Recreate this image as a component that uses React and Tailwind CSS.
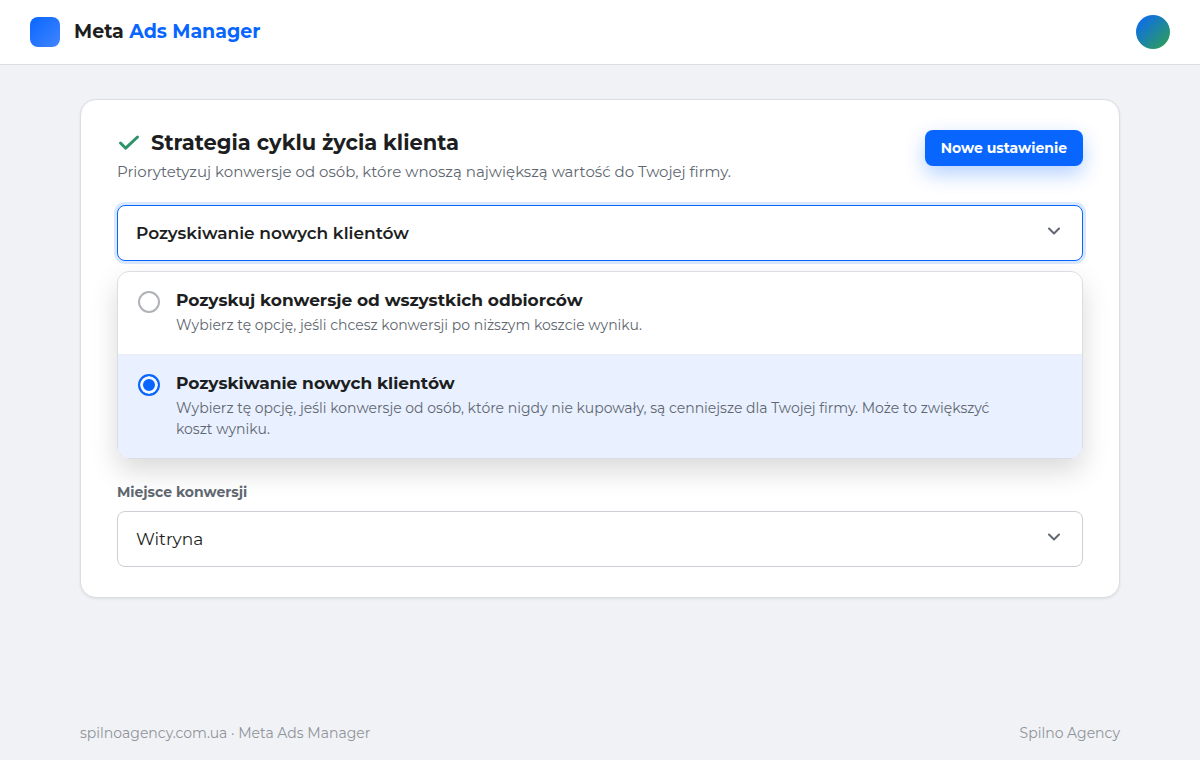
import { useState } from "react";

const OPTIONS = [
  {
    id: "all",
    title: "Pozyskuj konwersje od wszystkich odbiorców",
    text: "Wybierz tę opcję, jeśli chcesz konwersji po niższym koszcie wyniku.",
  },
  {
    id: "new",
    title: "Pozyskiwanie nowych klientów",
    text: "Wybierz tę opcję, jeśli konwersje od osób, które nigdy nie kupowały, są cenniejsze dla Twojej firmy. Może to zwiększyć koszt wyniku.",
  },
];

function Chevron() {
  return (
    <svg className="size-5 shrink-0" viewBox="0 0 20 20" fill="none" stroke="#606770" strokeWidth="2" strokeLinecap="round" strokeLinejoin="round" aria-hidden="true">
      <path d="M5 5.500l5 5 5-5" />
    </svg>
  );
}

function Header() {
  return (
    <header className="flex h-[65px] items-center justify-between border-b border-[#dadde1] bg-white px-[30px]">
      <div className="flex items-center gap-3.5">
        <span className="size-[30px] rounded-lg bg-[linear-gradient(135deg,#0866ff,#4285ff)]" />
        <span className="text-[19px] leading-[26px] font-bold">
          Meta <span className="text-[#0866ff]">Ads Manager</span>
        </span>
      </div>
      <span className="size-[34px] rounded-full bg-[linear-gradient(135deg,#0866ff,#31a24c)]" />
    </header>
  );
}

function Option({ option, checked, onSelect }) {
  return (
    <label className="flex cursor-pointer items-start gap-4 border-b border-[#ebedf0] px-5 pt-4 pb-[18px] last:border-b-0 has-checked:bg-[#e9f0ff]">
      <input
        type="radio"
        name="strategy"
        checked={checked}
        onChange={() => onSelect(option.id)}
        className="mt-[3px] size-[22px] shrink-0 appearance-none rounded-full border-2 border-[#b0b3b8] bg-white checked:border-[#0866ff] checked:bg-[#0866ff] checked:shadow-[inset_0_0_0_3px_#f3f7ff]"
      />
      <span className="block max-w-[840px]">
        <span className="block text-[17px] leading-6 font-bold">{option.title}</span>
        <span className="mt-[3px] block text-[14px] leading-[21px] text-[#606770]">{option.text}</span>
      </span>
    </label>
  );
}

export default function App() {
  const [open, setOpen] = useState(true);
  const [selected, setSelected] = useState("new");
  const current = OPTIONS.find((option) => option.id === selected);

  return (
    <div className="flex min-h-screen flex-col bg-[#f0f2f5] font-[Montserrat,Inter,sans-serif] text-[#1c1e21]">
      <Header />
      <main className="px-20 pt-[34px]">
        <section className="rounded-2xl border border-[#dadde1] bg-white px-9 py-[30px] shadow-[0_1px_3px_rgba(0,0,0,0.08)]">
          <div className="flex items-start justify-between gap-6">
            <div>
              <h1 className="flex items-center gap-2.5 text-[21px] leading-[26px] font-bold">
                <svg className="size-6" viewBox="0 0 24 24" fill="none" stroke="#2d9469" strokeWidth="3" strokeLinecap="round" strokeLinejoin="round" aria-hidden="true">
                  <path d="M3.500 12l5.200 5.200L20.500 6" />
                </svg>
                Strategia cyklu życia klienta
              </h1>
              <p className="mt-1 text-[15px] leading-6 text-[#606770]">
                Priorytetyzuj konwersje od osób, które wnoszą największą wartość do Twojej firmy.
              </p>
            </div>
            <button type="button" className="h-9 shrink-0 rounded-lg bg-[#0866ff] px-4 text-[14px] font-bold text-white shadow-[0_8px_20px_rgba(8,102,255,0.3)]">
              Nowe ustawienie
            </button>
          </div>

          <button
            type="button"
            aria-haspopup="true"
            aria-expanded={open}
            onClick={() => setOpen(!open)}
            className="mt-[21px] flex h-14 w-full items-center justify-between rounded-lg border border-[#0866ff] bg-white px-[18px] text-left text-[17px] font-semibold shadow-[0_0_0_3px_rgba(8,102,255,0.15)]"
          >
            <span className="pt-0.5">{current.title}</span>
            <Chevron />
          </button>

          {open && (
            <fieldset aria-label="Strategia cyklu życia klienta" className="mt-2.5 overflow-hidden rounded-xl border border-[#dadde1] bg-white shadow-[0_12px_28px_rgba(0,0,0,0.15)]">
              {OPTIONS.map((option) => (
                <Option key={option.id} option={option} checked={option.id === selected} onSelect={setSelected} />
              ))}
            </fieldset>
          )}

          <label htmlFor="place" className="mt-[23px] block text-[14px] leading-5 font-bold text-[#606770]">
            Miejsce konwersji
          </label>
          <div className="mt-[9px] grid items-center">
            <select id="place" className="col-start-1 row-start-1 h-14 w-full appearance-none rounded-lg border border-[#ccd0d5] bg-white px-[18px] pt-0.5 text-[17px]">
              <option>Witryna</option>
            </select>
            <span className="pointer-events-none col-start-1 row-start-1 mr-[19px] flex justify-self-end">
              <Chevron />
            </span>
          </div>
        </section>
      </main>
      <footer className="mt-auto flex justify-between px-20 pt-6 pb-4 text-[14px] leading-[22px] text-[#90949c]">
        <span>spilnoagency.com.ua · Meta Ads Manager</span>
        <span>Spilno Agency</span>
      </footer>
    </div>
  );
}
